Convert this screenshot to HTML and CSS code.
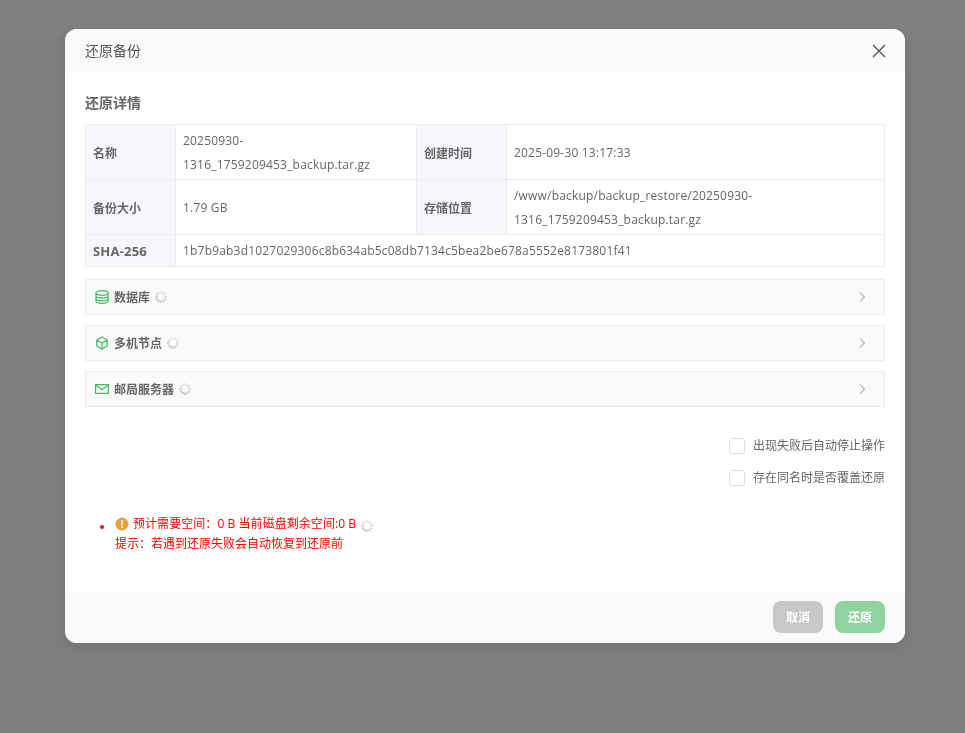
FILE: index.html
```html
<!DOCTYPE html>
<html lang="zh-CN">
<head>
<meta charset="utf-8">
<title>还原备份</title>
<link rel="stylesheet" href="styles.css">
</head>
<body>
<div class="topbar"></div>
<div class="overlay">
  <div class="modal">
    <header class="modal-head">
      <span class="title">还原备份</span>
      <svg class="close" width="16" height="16" viewBox="0 0 16 16"><path d="M2 2l12 12M14 2L2 14" stroke="#555" stroke-width="1.4" fill="none"/></svg>
    </header>
    <main class="modal-body">
      <h3 class="section-title">还原详情</h3>
      <table class="details">
        <colgroup><col class="c-label"><col class="c-val1"><col class="c-label"><col></colgroup>
        <tr class="tall">
          <th>名称</th><td>20250930-<br>1316_1759209453_backup.tar.gz</td>
          <th>创建时间</th><td>2025-09-30 13:17:33</td>
        </tr>
        <tr class="tall">
          <th>备份大小</th><td>1.79 GB</td>
          <th>存储位置</th><td>/www/backup/backup_restore/20250930-<br>1316_1759209453_backup.tar.gz</td>
        </tr>
        <tr class="short">
          <th class="sha">SHA-256</th><td colspan="3">1b7b9ab3d1027029306c8b634ab5c08db7134c5bea2be678a5552e8173801f41</td>
        </tr>
      </table>

      <div class="panels">
        <div class="panel">
          <svg class="p-icon" width="14" height="14" viewBox="0 0 14 14" fill="none" stroke="#3dbb5f" stroke-width="1.2"><ellipse cx="7" cy="2.9" rx="6" ry="2.2"/><path d="M1 2.9v8.2c0 1.2 2.7 2.2 6 2.2s6-1 6-2.2V2.9M1 5.7c0 1.2 2.7 2.2 6 2.2s6-1 6-2.2M1 8.4c0 1.2 2.7 2.2 6 2.2s6-1 6-2.2"/></svg>
          <span class="p-label">数据库</span>
          <svg class="spin"><use href="#spinner"/></svg>
          <svg class="chev" width="8" height="12" viewBox="0 0 8 12"><path d="M2 1.5l4.5 4.5L2 10.5" fill="none" stroke="#888" stroke-width="1"/></svg>
        </div>
        <div class="panel">
          <svg class="p-icon" width="14" height="14" viewBox="0 0 14 14" fill="none" stroke="#3dbb5f" stroke-width="1.2"><path d="M7 1l5.2 3v6L7 13l-5.2-3V4zM1.8 4L7 7l5.2-3M7 7v6"/></svg>
          <span class="p-label">多机节点</span>
          <svg class="spin"><use href="#spinner"/></svg>
          <svg class="chev" width="8" height="12" viewBox="0 0 8 12"><path d="M2 1.5l4.5 4.5L2 10.5" fill="none" stroke="#888" stroke-width="1"/></svg>
        </div>
        <div class="panel">
          <svg class="p-icon" width="14" height="14" viewBox="0 0 14 14" fill="none" stroke="#3dbb5f" stroke-width="1.2"><rect x="0.6" y="2.6" width="12.8" height="8.8"/><path d="M1 3.2l6 4.6 6-4.6"/></svg>
          <span class="p-label">邮局服务器</span>
          <svg class="spin"><use href="#spinner"/></svg>
          <svg class="chev" width="8" height="12" viewBox="0 0 8 12"><path d="M2 1.5l4.5 4.5L2 10.5" fill="none" stroke="#888" stroke-width="1"/></svg>
        </div>
      </div>

      <div class="options">
        <label class="opt"><span class="box"></span><span>出现失败后自动停止操作</span></label>
        <label class="opt"><span class="box"></span><span>存在同名时是否覆盖还原</span></label>
      </div>

      <ul class="notes">
        <li>
          <div class="note-line">
            <svg width="14" height="14" viewBox="0 0 14 14"><circle cx="7" cy="7" r="6.5" fill="#e6a23c"/><rect x="6.2" y="3" width="1.6" height="5" rx=".6" fill="#fff"/><circle cx="7" cy="10" r="1" fill="#fff"/></svg>
            <span class="need">预计需要空间：0 B 当前磁盘剩余空间:0 B</span>
            <svg class="spin"><use href="#spinner"/></svg>
          </div>
          <div class="note-line second">提示：若遇到还原失败会自动恢复到还原前</div>
        </li>
      </ul>
    </main>
    <footer class="modal-foot">
      <button class="btn cancel">取消</button>
      <button class="btn ok">还原</button>
    </footer>
  </div>
</div>
<svg class="defs" width="0" height="0">
  <symbol id="spinner" viewBox="0 0 14 14">
    <g stroke-width="1.3">
      <path d="M7 1v2.6" stroke="#e0e0e0"/>
      <path d="M10 1.8L8.7 4" stroke="#dadada"/>
      <path d="M12.2 4L10 5.3" stroke="#d4d4d4"/>
      <path d="M13 7h-2.6" stroke="#cecece"/>
      <path d="M12.2 10L10 8.7" stroke="#c6c6c6"/>
      <path d="M10 12.2L8.7 10" stroke="#bebebe"/>
      <path d="M7 13v-2.6" stroke="#b6b6b6"/>
      <path d="M4 12.2L5.3 10" stroke="#aeaeae"/>
      <path d="M1.8 10L4 8.7" stroke="#b4b4b4"/>
      <path d="M1 7h2.6" stroke="#c0c0c0"/>
      <path d="M1.8 4L4 5.3" stroke="#d0d0d0"/>
      <path d="M4 1.8L5.3 4" stroke="#dcdcdc"/>
    </g>
  </symbol>
</svg>
</body>
</html>
```
FILE: styles.css
```css
* { box-sizing: border-box; }
html, body { margin: 0; height: 100%; }
body {
  font-family: "Open Sans", "Noto Sans CJK SC", sans-serif;
  font-size: 12px;
  color: #666;
  background: #7c7d7c;
  overflow: hidden;
}
.topbar { height: 39px; background: #808180; }
.overlay {
  position: fixed;
  inset: 0;
  display: flex;
  justify-content: center;
  align-items: flex-start;
  padding: 29px 0 0 5px;
}
.modal {
  width: 840px;
  height: 614px;
  background: #fff;
  border-radius: 12px;
  overflow: hidden;
  display: flex;
  flex-direction: column;
  box-shadow: 0 2px 12px rgba(0, 0, 0, .12);
}
.modal-head {
  height: 44px;
  flex: none;
  background: #fafafa;
  display: flex;
  align-items: center;
  justify-content: space-between;
  padding: 0 18px 0 20px;
  font-size: 14px;
  color: #555;
}
.title { position: relative; top: -1px; }
.modal-body { flex: 1; padding: 20px 20px 0; min-height: 0; }
.section-title {
  margin: 0;
  font-size: 14px;
  line-height: 20px;
  font-weight: 700;
  color: #666;
}
.details {
  width: 800px;
  margin-top: 11px;
  border-collapse: collapse;
  table-layout: fixed;
}
.c-label { width: 90px; }
.c-val1 { width: 241px; }
.details th, .details td {
  border: 1px solid #eaedf3;
  padding: 0 7px;
  font-size: 12px;
  line-height: 24px;
  text-align: left;
}
.details th { background: #f5f7fb; font-weight: 700; color: #666; padding-top: 3px; }
.details td { color: #666; letter-spacing: .19px; padding-top: 1px; }
.details .sha { font-size: 13px; letter-spacing: .2px; padding-top: 0; }
.tall { height: 55px; }
.short { height: 32px; }
.panels { margin-top: 12px; display: flex; flex-direction: column; gap: 10px; }
.panel {
  height: 36px;
  background: #fafafa;
  border: 1px solid #eaedf3;
  display: flex;
  align-items: center;
  padding: 0 18px 0 9px;
}
.p-icon { flex: none; }
.p-label { margin-left: 5px; font-weight: 700; color: #666; }
.spin { width: 14px; height: 14px; flex: none; margin-left: 4px; }
.chev { margin-left: auto; }
.options {
  margin-top: 31px;
  display: flex;
  flex-direction: column;
  align-items: flex-end;
  gap: 16px;
}
.opt { display: flex; align-items: center; gap: 8px; height: 16px; color: #666; line-height: 16px; }
.box {
  width: 16px;
  height: 16px;
  background: #fff;
  border: 1px solid #dcdfe6;
  border-radius: 3px;
}
.notes {
  margin: 28px 0 0;
  padding: 0 0 0 30px;
  color: #f00;
  list-style: disc;
}
.notes li::marker { font-size: 11px; }
.note-line { display: flex; align-items: center; gap: 4px; height: 20px; line-height: 20px; }
.need { letter-spacing: .06px; }
.note-line.second { display: block; }
.note-line .spin { margin: 4px 0 0; }
.modal-foot {
  height: 52px;
  flex: none;
  background: #fafafa;
  display: flex;
  justify-content: flex-end;
  align-items: center;
  gap: 12px;
  padding: 0 20px;
}
.btn {
  width: 50px;
  height: 32px;
  border: 0;
  border-radius: 8px;
  color: #fff;
  font: 700 12px "Open Sans", "Noto Sans CJK SC", sans-serif;
  padding: 0;
}
.cancel { background: #c8c8c8; }
.ok { background: #8fd3a0; }
.defs { position: absolute; }
```
